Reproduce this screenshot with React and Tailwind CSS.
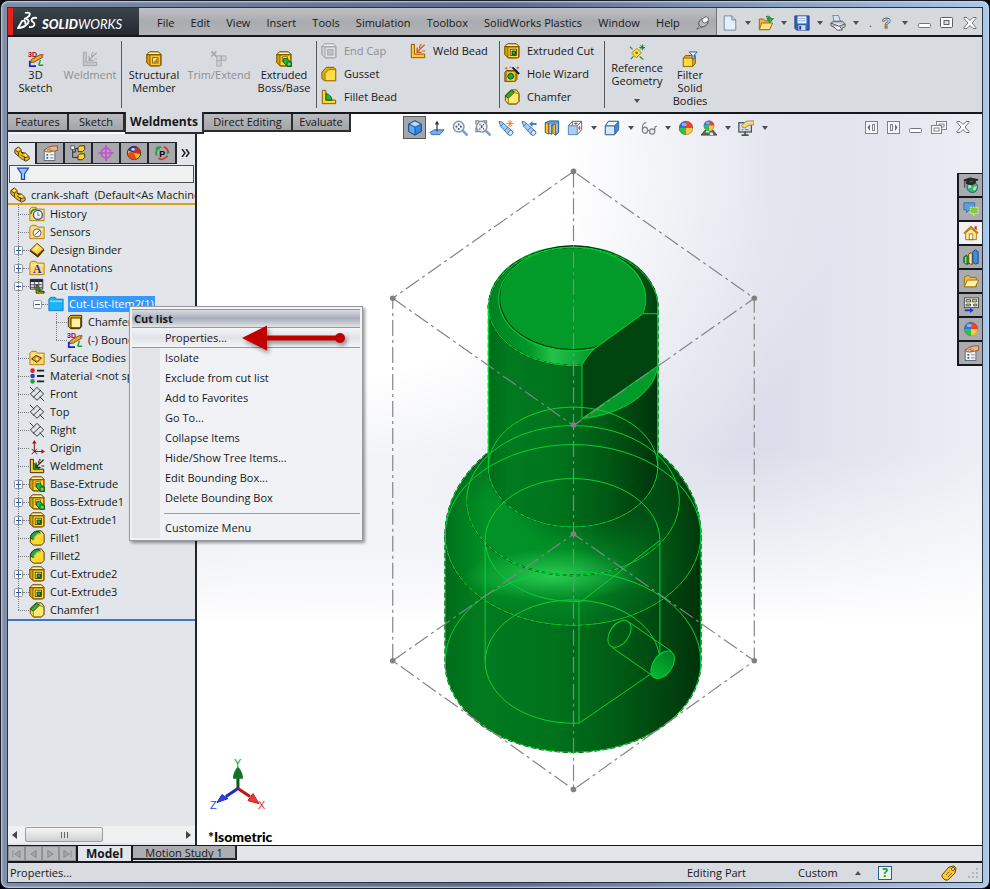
import React from "react";

/* ---------- icons ---------- */

const Svg = ({ children, s = 16, vb = "0 0 18 18", className = "" }) => (
  <svg width={s} height={s} viewBox={vb} className={"shrink-0 " + className} aria-hidden="true">
    {children}
  </svg>
);

const Cube = ({ line = "#7a5200", front = "#ffdc2e", top = "#fff3a0", side = "#d9a400" }) => (
  <g stroke={line} strokeLinejoin="round">
    <path d="M1 4 4 1H14L17 4V16L14 17H5L1 13Z" fill={side} />
    <path d="M1 4 4 1H14L17 4 5 4Z" fill={top} />
    <path d="M1 4 5 4.500V17L1 13Z" fill={side} />
    <rect x="4.500" y="4.500" width="12" height="12" rx="1" fill={front} />
  </g>
);

const Sketch3D = (p) => (
  <Svg {...p}>
    <text x="0" y="7" fontSize="8" fontWeight="700" fill="#b00020" fontFamily="Liberation Sans, sans-serif">3D</text>
    <path d="M2 11V17H9" fill="none" stroke="#1226d8" strokeWidth="2" />
    <path d="M12 16H17M12 16 14 10" fill="none" stroke="#15a32b" strokeWidth="1.500" />
    <path d="M4 9.500 14 4 16.500 7 7 12.500 2.500 13Z" fill="#f3a52a" stroke="#5b3200" strokeWidth=".9" />
    <path d="M14 4 17 3 17.500 6Z" fill="#d33" />
  </Svg>
);
const WeldIcon = ({ gray, green, ...p }) => {
  const l = gray ? "#a3a6a9" : green ? "#2b1c00" : "#8a4a00";
  return (
    <Svg {...p}>
      <path d="M1.500 1.500H5V12.500H16.500V16.500H1.500Z" fill={gray ? "#c3c6c9" : "#ffc933"} stroke={l} />
      {green && <path d="M5 5 12 12.500H5Z" fill="#19a535" stroke="#0b4a14" strokeWidth=".8" />}
      <path d="M8 10 16.500 2M8 5V10.500H13M11 3V6M14 9H17M12 1 12.500 3" stroke={gray ? l : green ? "#33260a" : "#d2500a"} strokeWidth="1.400" fill="none" />
    </Svg>
  );
};
const Structural = (p) => (
  <Svg {...p}>
    <Cube front="#ffc62c" />
    <rect x="7.500" y="7.500" width="6" height="6" fill="#fff0ae" stroke="#7a5200" />
    <path d="M8 13 13 8V13Z" fill="#b77d00" />
  </Svg>
);
const TrimIcon = (p) => (
  <Svg {...p}>
    <g fill="#cfd2d5" stroke="#a3a6a9">
      <path d="M6.500 5.500H11.500V17H6.500ZM11.500 5.500H17V10.500H11.500ZM6.500 11H11.500" />
      <path d="M0.500 .5 6 6M6 .5 .5 6" strokeWidth="1.800" />
    </g>
  </Svg>
);
const BossIcon = (p) => (
  <Svg {...p}>
    <Cube />
    <path d="M7 6.500H13V12H7Z" fill="#fff4b8" stroke="#7a5200" />
    <path d="M8.500 8.500H12L17.500 13V17.500H13L8.500 13Z" fill="#25b53e" stroke="#0b5a1a" />
    <path d="M12.500 12.500H17V17H12.500Z" fill="#63dc6f" stroke="#0b5a1a" />
  </Svg>
);
const CutIcon = (p) => (
  <Svg {...p}>
    <Cube />
    <rect x="7" y="7" width="7" height="7" fill="#fff6c0" stroke="#5c3e00" />
    <path d="M9 9H13V13H9Z" fill="#27a63a" stroke="#073d10" />
  </Svg>
);
const GussetIcon = (p) => (
  <Svg {...p}>
    <path d="M1 7 6 1.500H14.500L16.500 3.500V16.500H4L1 14Z" fill="#e3ab0b" stroke="#7a5200" />
    <path d="M4.500 8.500 9 4H16.500V16.500H4.500Z" fill="#ffdf45" stroke="#9a6a00" />
  </Svg>
);
const FilletBead = (p) => (
  <Svg {...p}>
    <path d="M1.500 1.500H5.500V12.500H16.500V16.500H1.500Z" fill="#ffd52e" stroke="#7a5200" />
    <path d="M5.500 5C10 6 12 9 12.500 12.500H5.500Z" fill="#22b53c" stroke="#0b5a1a" />
  </Svg>
);
const EndCap = (p) => (
  <Svg {...p}>
    <Cube line="#a3a6a9" front="#dcdfe1" top="#e8eaec" side="#cdd0d3" />
    <rect x="7.500" y="7.500" width="6" height="6" fill="#bfc2c5" stroke="#a3a6a9" />
  </Svg>
);
const HoleWizard = (p) => (
  <Svg {...p}>
    <path d="M1 7 3 5H14.500V15L12.500 17.500H1Z" fill="#e3ab0b" stroke="#5c3e00" />
    <rect x="2.500" y="6.500" width="10" height="10.500" fill="#ffd42e" stroke="#7a5200" strokeWidth=".7" />
    <circle cx="7.500" cy="11.500" r="3.300" fill="#28a63b" stroke="#064410" />
    <path d="M9.500 1.500 17 9" stroke="#1b1b1b" strokeWidth="2.200" />
    <path d="M1 2.500H4M2.500 1V4M6 1.500H8.500M14 2H17M15.500 .5V3.500" stroke="#e2571a" />
  </Svg>
);
const ChamferIcon = (p) => (
  <Svg {...p}>
    <path d="M1.500 7 8 1H14L17 5V14L14 17H5L1.500 13Z" fill="#ffda35" stroke="#5c3e00" />
    <path d="M1.500 8 8.500 1.500 12 3.500 5 10.500Z" fill="#27b13e" stroke="#07490f" />
    <path d="M5 10.500 12 4 16.500 5.500V14L13.500 16.500H5Z" fill="#ffea72" stroke="#8a6400" strokeWidth=".8" />
  </Svg>
);
const FilletIcon = (p) => (
  <Svg {...p}>
    <path d="M1.500 9C2 4 6 1 11 1H14L17 5V14L14 17H5L1.500 14Z" fill="#ffd92c" stroke="#3d2a00" />
    <path d="M1.500 9C2 4 6 1 11 1.500L13 4C9 4 6 7 5.500 11Z" fill="#24a83b" stroke="#053d0d" />
    <path d="M5.500 11C6 7 9 4 13 4" fill="none" stroke="#fff3a0" />
  </Svg>
);
const RefGeom = (p) => (
  <Svg {...p}>
    <path d="M9 5 14 10 8 15.500 3 10Z" fill="#ffe34d" stroke="#a37a00" />
    <path d="M1 3 4 6M12 14 16 17.500M2 17 5 14" stroke="#24862f" strokeWidth="1.300" />
    <path d="M11.500 4H18M15 .5V7M12.500 1.500 17 6M17 1.500 12.500 6" stroke="#11752b" />
    <circle cx="8.500" cy="10" r="1.500" fill="#9a6a00" />
  </Svg>
);
const FilterSolid = (p) => (
  <Svg {...p}>
    <path d="M1.500 8 4 5H15V14L12 17.500H1.500Z" fill="#e3ab0b" stroke="#7a5200" />
    <rect x="1.500" y="8" width="10.500" height="9.500" fill="#ffd940" stroke="#9a6a00" />
    <path d="M8 1H17L13.500 5V9H11.500V5Z" fill="#e2efff" stroke="#1958c4" />
  </Svg>
);
const PartIcon = (p) => (
  <Svg {...p}>
    <path d="M1 4 5 1 8 4V7L13 8 17 12V15L13 17 8 14 1 8Z" fill="#f4bd16" stroke="#3d2900" />
    <path d="M2 5 5 7 7 5M8 10 12 13 16 12M8 7 12 10V16M5 7V11" stroke="#3d2900" fill="none" />
    <path d="M3 4 5 2.500 6.500 4 4.500 5.500ZM10 9.500 13 9 15.500 11.500 12.500 12Z" fill="#ffe98a" />
  </Svg>
);
const PropIcon = (p) => (
  <Svg {...p}>
    <rect x="2.500" y="5.500" width="12" height="12" fill="#f1f3f6" stroke="#5d6672" />
    <path d="M5 11H7M5 14.500H7" stroke="#2c5dc5" strokeWidth="2" />
    <path d="M9 11H13M9 14.500H13" stroke="#7b838e" />
    <path d="M2.500 6 7 2.500 13 1H17.500V6L13 7 8 8 4 7.500Z" fill="#eeb782" stroke="#7a471d" strokeWidth=".9" />
    <path d="M6 5.500 10 4M8 7 12 5.500" stroke="#7a471d" strokeWidth=".7" />
  </Svg>
);
const ConfigIcon = (p) => (
  <Svg {...p}>
    <path d="M3 5V14H9M3 8H6V4H9" stroke="#222" fill="none" />
    <rect x="1" y="1" width="4" height="4" fill="#eee" stroke="#333" strokeWidth=".7" />
    <path d="M9 3 11 1H16.500V5L14 7.500H9ZM9 12 11 10H16.500V14L14 16.500H9Z" fill="#ffd52c" stroke="#3d2900" />
  </Svg>
);
const Target = (p) => (
  <Svg {...p}>
    <g stroke="#c64fd6" fill="none" strokeWidth="1.800">
      <circle cx="9" cy="9" r="5.500" />
      <path d="M9 0V18M0 9H18" />
    </g>
  </Svg>
);
const Ball = ({ x = 9, y = 9, r = 8 }) => (
  <g transform={`translate(${x} ${y}) scale(${r / 8})`}>
    <circle r="8" fill="#eee" />
    <path d="M0 0V-8A8 8 0 0 0-8 0Z" fill="#2f6fe0" />
    <path d="M0 0V-8A8 8 0 0 1 8 0Z" fill="#e8442e" />
    <path d="M0 0H-8A8 8 0 0 0 0 8Z" fill="#2fc04a" />
    <path d="M0 0H8A8 8 0 0 1 0 8Z" fill="#f6c843" />
    <circle r="7.600" fill="none" stroke="#555" strokeWidth=".7" opacity=".6" />
    <ellipse cx="-2" cy="-4" rx="3" ry="2" fill="#fff" opacity=".45" />
  </g>
);
const BallIcon = (p) => <Svg {...p}><Ball /></Svg>;
const DisplayIcon = (p) => (
  <Svg {...p}>
    <circle cx="9" cy="9" r="7.500" fill="#f5c21c" stroke="#222" />
    <path d="M9 9 2 6A7.500 7.500 0 0 1 12 2Z" fill="#1d37b8" />
    <path d="M9 9 11 2A7.500 7.500 0 0 1 16.500 10Z" fill="#d6281c" />
    <path d="M9 9C5 7 3 8 2 11 4 17 10 17 12 16Z" fill="#e84a1d" />
    <ellipse cx="8" cy="5" rx="2" ry="1.500" fill="#fff" opacity=".8" />
  </Svg>
);
const PlasticIcon = (p) => (
  <Svg {...p}>
    <path d="M3 12A7 7 0 0 1 8 2" fill="none" stroke="#25a03a" strokeWidth="2" />
    <path d="M11 2A7 7 0 0 1 16 8" fill="none" stroke="#d8342b" strokeWidth="2" />
    <path d="M15 12A7 7 0 0 1 5 15" fill="none" stroke="#d8342b" strokeWidth="2" />
    <path d="M1 4 5 1 7 5ZM14 7 18 8 15 11Z" fill="#25a03a" />
    <text x="6" y="13" fontSize="10" fontWeight="700" fontFamily="Liberation Sans, sans-serif">P</text>
  </Svg>
);
const Folder = ({ children, fill = "#ffd968", line = "#b07a00" }) => (
  <Svg>
    <path d="M1 3.500 3 1.500H8L9.500 3.500H17V16.500H1Z" fill={fill} stroke={line} />
    <path d="M2 5H16V7H2Z" fill="#fff" opacity=".45" />
    {children}
  </Svg>
);
const HistoryIcon = () => (
  <Folder>
    <circle cx="10" cy="10" r="5" fill="#eef4ff" stroke="#315a9c" strokeWidth="1.500" />
    <path d="M10 7V10.500H12" stroke="#c33" fill="none" />
    <path d="M2 9C3 4 6 3 9 4" stroke="#1a9a34" strokeWidth="1.800" fill="none" />
  </Folder>
);
const SensorsIcon = () => (
  <Folder>
    <circle cx="9" cy="10" r="4.500" fill="#f5f5ef" stroke="#556" />
    <path d="M7 12 12 7" stroke="#333" />
  </Folder>
);
const BinderIcon = () => (
  <Svg>
    <path d="M1 10 9 2 17 9 10 17Z" fill="#5a3c00" stroke="#2b1c00" />
    <path d="M1.500 9 9 1.500 16.500 8 9.500 14.500Z" fill="#ffd13c" stroke="#6b4700" />
    <path d="M5 8 9 4 12 6.500 8 10Z" fill="#ffeb96" />
  </Svg>
);
const AnnotIcon = () => (
  <Folder>
    <text x="4.500" y="15" fontSize="13" fontWeight="700" fill="#1b2fb8" fontFamily="Liberation Serif, serif">A</text>
  </Folder>
);
const SurfaceIcon = () => (
  <Folder>
    <path d="M3 10 8 6 14 9 9 14Z" fill="#e29a1b" stroke="#3b2600" />
    <circle cx="9" cy="10" r="1.500" fill="#ffe9a0" />
  </Folder>
);
const CutListIcon = () => (
  <Svg>
    <path d="M1.500 1.500H15.500V12.500H1.500Z" fill="#e8ebef" stroke="#223" />
    <path d="M1.500 3H15.500" stroke="#223" strokeWidth="3" />
    <path d="M1 7.500H15M1 10.500H15M6 2V12M11 2V12" stroke="#445" />
    <path d="M8 8H10V15H17V17H8Z" fill="#f5bf16" stroke="#221700" />
    <path d="M10 9 15 15H10Z" fill="#18802c" />
  </Svg>
);
const BlueFolder = () => <Folder fill="#19b4f5" line="#1478c8" />;
const BodyIcon = () => (
  <Svg>
    <path d="M1.500 4 4 1.500H16.500V14L14 16.500H4L1.500 14Z" fill="#e3a900" stroke="#2d1e00" />
    <rect x="4.500" y="4.500" width="11" height="11" fill="#fff2a0" stroke="#2d1e00" />
  </Svg>
);
const MaterialIcon = () => (
  <Svg>
    <circle cx="4" cy="3" r="2.600" fill="#d8281f" /><circle cx="4" cy="9" r="2.600" fill="#2446c8" /><circle cx="4" cy="15" r="2.600" fill="#1ca436" />
    <path d="M9 3H17M9 9H17M9 15H17" stroke="#222" strokeWidth="2" />
  </Svg>
);
const PlaneIcon = () => (
  <Svg>
    <path d="M9 1.500 16.500 9 9 16 1.500 9ZM1 1 6 6M12 12 17 17M13 5 4.500 13" fill="none" stroke="#222" />
  </Svg>
);
const OriginIcon = () => (
  <Svg>
    <path d="M6 13V3M6 13H16" stroke="#a01818" strokeWidth="1.200" fill="none" />
    <path d="M3.500 4 6 0 8.500 4ZM14 10.500 18 13 14 15.500Z" fill="#a01818" />
    <path d="M3 10 9 16M9 10 3 16" stroke="#222" />
  </Svg>
);
const Funnel = () => (
  <Svg s={14}>
    <path d="M2 1.500H16L11 9V16H7V9Z" fill="#8ec5ff" stroke="#1749b8" strokeWidth="1.500" />
  </Svg>
);
const Caret = ({ up, className = "" }) => (
  <svg width="6" height="4" viewBox="0 0 6 4" className={"shrink-0 " + className} aria-hidden="true">
    <path d={up ? "M0 4 3 0 6 4Z" : "M0 0 6 0 3 4Z"} fill="#4a4f56" />
  </svg>
);

/* view toolbar */
const IsoCube = () => (
  <Svg>
    <path d="M9 1 16 4.500V13L9 17 2 13V4.500Z" fill="#2f86e8" stroke="#123f80" />
    <path d="M9 1 16 4.500 9 8 2 4.500Z" fill="#b8dcff" stroke="#123f80" strokeWidth=".8" />
    <path d="M9 8V17L2 13V4.500Z" fill="#5da9f5" stroke="#123f80" strokeWidth=".8" />
  </Svg>
);
const NormalTo = () => (
  <Svg>
    <path d="M1 14 6 11H17L12 16.500H3Z" fill="#79aee6" stroke="#2d68ad" />
    <path d="M9 13V3" stroke="#333" strokeWidth="1.300" /><path d="M6.500 5 9 .5 11.500 5Z" fill="#333" />
  </Svg>
);
const Zoom = ({ area }) => (
  <Svg>
    {area
      ? <path d="M1 5V1H5M9 1H13V4M1 9V13H4" fill="none" stroke="#7b828c" strokeWidth="1.300" />
      : null}
    <circle cx="7.500" cy="7.500" r="6" fill="#eef1f5" fillOpacity=".8" stroke="#8b929c" strokeWidth="1.600" />
    <path d={area ? "M5 5H6M9 5H10M5 10H6M9 10H10M7.500 6V9" : "M4 7.500H6M9 7.500H11M7.500 4V6M7.500 9V11"} stroke="#4a525d" strokeWidth="1.800" />
    <path d="M12 12 16.500 16.500" stroke="#7a9fd0" strokeWidth="3" strokeLinecap="round" />
  </Svg>
);
const Scope = ({ arrow }) => (
  <Svg>
    <path d="M1 1.500 4 2 15.500 12 12 17 3 7Z" fill="#a8cdf4" stroke="#3c6ea8" />
    <path d="M3 7 6 4M7.500 12 11.500 8" stroke="#3c6ea8" fill="none" />
    <ellipse cx="14" cy="14.500" rx="3" ry="2.500" fill="#d6e8fb" stroke="#3c6ea8" transform="rotate(-50 14 14.500)" />
    {arrow ? <path d="M9 4.500 13 1V3.300H17.500V5.700H13V8Z" fill="#3e82d8" /> : <path d="M13.500 0V8M9.500 4H17.500M11 1 16 7M16 1 11 7" stroke="#ef7d20" />}
  </Svg>
);
const Section = () => (
  <Svg>
    <path d="M1.500 3 6 1H16.500V14L13 17V6H9V16L1.500 14Z" fill="#5b9ddf" stroke="#20508a" />
    <path d="M1.500 3 5 4V16L1.500 14ZM10 5H13V17L10 15Z" fill="#f7c22d" stroke="#7a5200" strokeWidth=".8" />
    <path d="M7 5V15M14.500 4V14" stroke="#d8e9fb" />
  </Svg>
);
const Orient = () => (
  <Svg>
    <path d="M1.500 6.500H11.500V16.500H1.500Z" fill="#a9cdf5" stroke="#4a7db8" />
    <path d="M1.500 6.500 6 1.500H16.500V11L11.500 16.500M11.500 6.500 16.500 1.500M6 1.500V6.500" fill="none" stroke="#555" />
    <path d="M8 4H12M10 2.500V5.500M14 7V11M12.500 9H15.500" stroke="#d22" />
  </Svg>
);
const Style = () => (
  <Svg>
    <path d="M1.500 6.500 5 1.500H16.500V11L12 16.500H1.500Z" fill="#4588d8" stroke="#34629c" />
    <path d="M1.500 6.500H12V16.500H1.500Z" fill="#d5e8fc" stroke="#34629c" />
    <path d="M1.500 6.500 5 1.500H16.500L12 6.500Z" fill="#eef6ff" stroke="#34629c" />
  </Svg>
);
const Glasses = () => (
  <Svg>
    <g fill="#e2ebf4" stroke="#77818c" strokeWidth="1.300">
      <ellipse cx="4.500" cy="11.500" rx="3" ry="3.500" /><ellipse cx="12.500" cy="13" rx="3" ry="3" />
      <path d="M7.500 11.500 9.500 12M1.500 10C1 6 3 3 6 3M15.500 12V9C15.500 7 17 7 18 7" fill="none" />
    </g>
  </Svg>
);
const Scene = () => (
  <Svg>
    <path d="M0 17 5 11H13L18 17Z" fill="#5a6a5a" stroke="#444" />
    <path d="M4 17 6.500 11H9.500V14H13L14 17H10V14H5Z" fill="#e8e8e8" />
    <Ball y={6.500} r={6} />
  </Svg>
);
const ViewSet = () => (
  <Svg>
    <rect x="1" y="3" width="14" height="10.500" fill="#dfe4ea" stroke="#4b5560" strokeWidth="1.500" />
    <path d="M4 17H12M8 13V17" stroke="#4b5560" strokeWidth="2" />
    <path d="M4 11H6M8 11H12" stroke="#4b5560" />
    <path d="M4 6 9 1.500 13 1H18V5.500L12 6 8 9 5 8.500Z" fill="#f2d38b" stroke="#8d6a26" strokeWidth=".8" />
  </Svg>
);
const PaneLeft = ({ flip }) => (
  <svg width="13" height="13" viewBox="0 0 13 13" className={flip ? "-scale-x-100" : ""} aria-hidden="true">
    <rect x=".5" y=".5" width="12" height="12" fill="#f6f7fa" stroke="#7d828a" />
    <path d="M5 3V10L2.500 6.500Z" fill="#666b73" /><rect x="7.500" y="3.500" width="2" height="6" fill="#fff" stroke="#7d828a" />
  </svg>
);
const MinIcon = () => (
  <svg width="13" height="11" viewBox="0 0 13 11" aria-hidden="true"><rect x=".5" y="6.500" width="12" height="4" rx="1" fill="#fff" stroke="#70757c" /></svg>
);
const MaxIcon = () => (
  <svg width="13" height="11" viewBox="0 0 13 11" aria-hidden="true"><rect x=".5" y=".5" width="12" height="10" rx="1" fill="#fff" stroke="#5c6168" /><rect x="4" y="3.500" width="5" height="4" fill="#d8dbdf" stroke="#5c6168" /></svg>
);
const RestoreIcon = () => (
  <svg width="16" height="13" viewBox="0 0 16 13" aria-hidden="true"><g fill="#fff" stroke="#7d828a"><rect x="5.500" y=".5" width="10" height="8" /><rect x="8" y="3" width="5" height="3" /><rect x=".5" y="4.500" width="10" height="8" /><rect x="3" y="7" width="5" height="3" /></g></svg>
);
const CloseIcon = () => (
  <svg width="14" height="12" viewBox="0 0 14 12" aria-hidden="true"><path d="M1 .5H4L7 3.500 10 .5H13V1.500L9 6 13 10.500V11.500H10L7 8.500 4 11.500H1V10.500L5 6 1 1.500Z" fill="#fff" stroke="#6a6f77" /></svg>
);

/* quick access */
const NewDoc = () => <Svg><path d="M2.500 1H11L15.500 5.500V17H2.500Z" fill="#e3effc" stroke="#6b7f9c" /><path d="M11 1V5.500H15.500" fill="#c6d9f0" stroke="#6b7f9c" /></Svg>;
const OpenDoc = () => (
  <Svg>
    <path d="M1.500 4.500H6L8 6.500H13V16.500H1.500Z" fill="#f0b73a" stroke="#8d6212" />
    <path d="M4 9H16.500L13 16.500H1.500Z" fill="#ffe283" stroke="#8d6212" />
    <path d="M9 2C12 .5 14 1.500 14.500 4H17.500L13.500 8.500 10 4H12.500C12 3 11 2.500 9 2Z" fill="#2cb043" stroke="#0e6420" strokeWidth=".7" />
  </Svg>
);
const SaveDoc = () => (
  <Svg>
    <path d="M1 1H17V17H3L1 15Z" fill="#2d62c2" stroke="#173a80" />
    <rect x="4" y="1.500" width="10" height="8" fill="#eef4fc" /><path d="M5 4H13M5 6.500H13" stroke="#8ba4cc" />
    <rect x="5" y="11.500" width="8" height="5.500" fill="#cfd6e0" /><rect x="6" y="12.500" width="2" height="4" fill="#173a80" />
  </Svg>
);
const PrintDoc = () => (
  <Svg>
    <path d="M3 .5H9.500L12 8H5Z" fill="#cfe3fb" stroke="#66809f" />
    <path d="M1 9 4 7H14L17 10V13L11 17 1 12Z" fill="#b9bec6" stroke="#4d545e" />
    <path d="M1 9 10 12.500 17 10M4 13 8 17H14L11 13" fill="#f2f3f5" stroke="#4d545e" />
  </Svg>
);
const HelpIcon = () => <Svg><text x="3" y="15" fontSize="17" fontWeight="700" fill="#fff" stroke="#555a62" strokeWidth=".9" fontFamily="Liberation Sans, sans-serif">?</text></Svg>;
const PinIcon = () => (
  <Svg s={14}>
    <path d="M6 10 1 17 9 13" fill="#eee" stroke="#555" />
    <ellipse cx="9.500" cy="8.500" rx="6.500" ry="5" fill="#b9bdc2" stroke="#444" transform="rotate(-35 9.500 8.500)" />
    <ellipse cx="12" cy="5" rx="4.500" ry="3.500" fill="#f4f5f6" stroke="#555" transform="rotate(-35 12 5)" />
  </Svg>
);

/* task pane */
const Learn = () => (
  <Svg><circle cx="10.500" cy="11.500" r="6" fill="#3cb45a" stroke="#1c5c8a" /><path d="M6 9 10 8 9 12 6 13ZM12 11 16 10 14 15 11 15Z" fill="#a5dcf7" /><path d="M1 3.500 8 1 17 3 10 6.500ZM4 5V7.500L10 9 14 6.500V5M2 4V12" fill="#2a2a2a" stroke="#1c1c1c" /></Svg>
);
const Forum = () => (
  <Svg><path d="M1 2H13V10H7L4 13V10H1Z" fill="#5a9fe0" stroke="#3470ad" /><path d="M8 7H17V14H14L12 17V14H8Z" fill="#8ccb35" stroke="#e7f5c5" strokeDasharray="2 1" /></Svg>
);
const Home = () => (
  <Svg><path d="M3 9V16.500H15V9L9 4Z" fill="#ffe9a3" stroke="#a66a00" /><path d="M1 9.500 9 2 17 9.500" fill="none" stroke="#c98200" strokeWidth="2" /><path d="M13 1.500H15.500V6L13 4Z" fill="#c33" /><rect x="7" y="10" width="4" height="6.500" fill="#fff" stroke="#a66a00" /></Svg>
);
const Library = () => (
  <Svg><path d="M1 9 4 7 6 9V17H3L1 15Z" fill="#1da14b" stroke="#0b4d1c" /><path d="M6 6 9 4 11 6V17H8L6 15Z" fill="#f2bd1d" stroke="#6b4700" /><path d="M3 9V16M8.500 6V16" stroke="#fff" strokeWidth=".8" /><path d="M11 3 14 1 17 3V16L14 17 11 15Z" fill="#3b8ee0" stroke="#173f80" /></Svg>
);
const Explorer = () => (
  <Svg><path d="M1.500 4.500 6 2.500 8 5H15V15.500H1.500Z" fill="#f2b944" stroke="#9a6a12" /><path d="M5 8H17.500L14 15.500H1.500Z" fill="#fff0a8" stroke="#9a6a12" /></Svg>
);
const Palette = () => (
  <Svg><g stroke="#444" fill="#ffe45c"><rect x="1.500" y="1" width="16" height="11" fill="#eef2f8" /><path d="M3.500 3H8.500V5.500H3.500ZM10.500 3H15.500V5.500H10.500ZM3.500 8H8.500V10H3.500ZM12 8H15.500V10H12Z" /></g><path d="M2 15H9" stroke="#1834c8" strokeWidth="2" /><path d="M8 12 12 15 8 18Z" fill="#1834c8" /></Svg>
);

const ICONS_TASK = [
  ["Resources", Learn], ["Forum", Forum], ["Home", Home], ["Design Library", Library],
  ["File Explorer", Explorer], ["View Palette", Palette], ["Appearances", BallIcon], ["Custom Properties", PropIcon],
];

/* ---------- title bar ---------- */

const MENUS = ["File", "Edit", "View", "Insert", "Tools", "Simulation", "Toolbox", "SolidWorks Plastics", "Window", "Help"];

function TitleBar() {
  return (
    <header className="flex h-[29px] shrink-0 border-b-2 border-[#15181c] bg-[#d6d9dc]">
      <div className="flex w-[131px] shrink-0 items-center border-l-[5px] border-[#e2231a] bg-linear-to-b from-[#3c444c] to-[#23292f] text-white">
        <svg width="22" height="22" viewBox="0 0 22 22" className="ml-[4px]" fill="none" stroke="#fff" strokeWidth="1.800" aria-hidden="true">
          <path d="M8 2C12 1 14 2 12 5 11 6 9 8 7 8M9 8C13 9 12 12 9 14 7 16 3 17 1 17L5 10C8 9 9 11 8 13M20 7C15 6 13 9 16 11 19 13 17 17 12 16" />
        </svg>
        <span className="pt-[4px] pl-[3px] font-['Lato',sans-serif] text-[13px] font-black italic">SOLID<span className="font-normal">WORKS</span></span>
      </div>
      <nav className="flex flex-1 items-center justify-between bg-linear-to-b from-[#bfc1c4] via-[#a9abae] to-[#b2b4b7] pt-[3px] pr-[6px] pl-[18px]">
        {MENUS.map((m) => <button key={m}>{m}</button>)}
        <button aria-label="Pin menu"><PinIcon /></button>
      </nav>
      <div className="flex w-[266px] shrink-0 items-center border-l border-[#70747a] pt-[2px]">
        <div className="flex pl-[5px]">
          {[["New", NewDoc], ["Open", OpenDoc], ["Save", SaveDoc], ["Print", PrintDoc]].map(([n, I]) => (
            <button key={n} aria-label={n} className="flex w-9 items-center gap-[7px]"><I /><Caret /></button>
          ))}
        </div>
        <span className="ml-[3px] text-[#2c5d9c]">.</span>
        <button aria-label="Help" className="ml-[7px] flex items-center gap-[7px]"><HelpIcon /><Caret /></button>
        <div className="flex flex-1 items-center justify-between pr-[5px] pl-[10px]">
          <button aria-label="Minimize"><MinIcon /></button>
          <button aria-label="Maximize"><MaxIcon /></button>
          <button aria-label="Close"><CloseIcon /></button>
        </div>
      </div>
    </header>
  );
}

/* ---------- ribbon ---------- */

const Big = ({ icon: I, lines, off, w, caret, top }) => (
  <button className={"flex flex-col items-center leading-[13px] whitespace-nowrap " + w + " " + (top ? "pt-[7px] " : "pt-[14px] ") + (off ? "text-[#8c8f92]" : "")}>
    <I className="mb-px" />
    {lines.map((l) => <span key={l}>{l}</span>)}
    {caret && <Caret className="mt-[12px]" />}
  </button>
);
const Small = ({ icon: I, label, off }) => (
  <button className={"flex h-[23px] items-center gap-[7px] whitespace-nowrap " + (off ? "text-[#8c8f92]" : "")}><I />{label}</button>
);
const Rule = () => <div className="my-[4px] w-px shrink-0 bg-[#55595e]" />;

function Ribbon() {
  return (
    <section aria-label="Weldments commands" className="flex h-[77px] shrink-0 border-b-2 border-[#15181c] bg-[#d8dbdf]">
      <div className="flex w-[113px] shrink-0">
        <Big icon={Sketch3D} lines={["3D", "Sketch"]} w="w-[55px]" />
        <Big icon={(p) => <WeldIcon gray {...p} />} lines={["Weldment"]} off w="w-[54px]" />
      </div>
      <Rule />
      <div className="flex w-[194px] shrink-0">
        <Big icon={Structural} lines={["Structural", "Member"]} w="w-[64px]" />
        <Big icon={TrimIcon} lines={["Trim/Extend"]} off w="w-[66px]" />
        <Big icon={BossIcon} lines={["Extruded", "Boss/Base"]} w="w-[64px]" />
      </div>
      <Rule />
      <div className="flex w-[182px] shrink-0 gap-[13px] pt-[2px] pl-[4px]">
        <div className="w-[76px]">
          <Small icon={EndCap} label="End Cap" off />
          <Small icon={GussetIcon} label="Gusset" />
          <Small icon={FilletBead} label="Fillet Bead" />
        </div>
        <div><Small icon={WeldIcon} label="Weld Bead" /></div>
      </div>
      <Rule />
      <div className="w-[104px] shrink-0 pt-[2px] pl-[4px]">
        <Small icon={CutIcon} label="Extruded Cut" />
        <Small icon={HoleWizard} label="Hole Wizard" />
        <Small icon={ChamferIcon} label="Chamfer" />
      </div>
      <Rule />
      <Big icon={RefGeom} lines={["Reference", "Geometry"]} caret top w="w-[64px]" />
      <Big icon={FilterSolid} lines={["Filter", "Solid", "Bodies"]} w="w-[42px]" />
    </section>
  );
}

const TABS = [["Features", "w-[61px]"], ["Sketch", "w-[56px]"], ["Weldments", "w-[79px]"], ["Direct Editing", "w-[89px]"], ["Evaluate", "w-[58px]"]];

function CommandTabs() {
  return (
    <div role="tablist" className="flex h-5 shrink-0 items-start">
      {TABS.map(([t, w], i) => (
        <button key={t} role="tab" aria-selected={i === 2}
          className={"shrink-0 border-r-2 border-b-2 whitespace-nowrap border-[#2a2d32] " + w + (i === 2 ? " -mt-[2px] h-[22px] border-l bg-[#d8dbdf] text-[12px] font-bold" : " h-[18px] bg-linear-to-b from-[#b9bbbe] to-[#a2a4a7] leading-4")}>
          {t}
        </button>
      ))}
    </div>
  );
}

/* ---------- feature tree ---------- */

const WeldTree = () => <WeldIcon green />;
const TREE = [
  { t: "History", i: HistoryIcon }, { t: "Sensors", i: SensorsIcon },
  { t: "Design Binder", i: BinderIcon, x: "+" }, { t: "Annotations", i: AnnotIcon, x: "+" },
  { t: "Cut list(1)", i: CutListIcon, x: "-" },
  { t: "Cut-List-Item2(1)", i: BlueFolder, x: "-", d: 1 },
  { t: "Chamfer1", i: BodyIcon, d: 2 }, { t: "(-) Bounding Box", i: Sketch3D, d: 2 },
  { t: "Surface Bodies", i: SurfaceIcon }, { t: "Material <not specified>", i: MaterialIcon },
  { t: "Front", i: PlaneIcon }, { t: "Top", i: PlaneIcon }, { t: "Right", i: PlaneIcon },
  { t: "Origin", i: OriginIcon }, { t: "Weldment", i: WeldTree },
  { t: "Base-Extrude", i: BossIcon, x: "+" }, { t: "Boss-Extrude1", i: BossIcon, x: "+" },
  { t: "Cut-Extrude1", i: CutIcon, x: "+" }, { t: "Fillet1", i: FilletIcon }, { t: "Fillet2", i: FilletIcon },
  { t: "Cut-Extrude2", i: CutIcon, x: "+" }, { t: "Cut-Extrude3", i: CutIcon, x: "+" }, { t: "Chamfer1", i: ChamferIcon },
];
const INDENT = ["pl-[6px]", "pl-[25px]", "pl-[44px]"];

function TreeRow({ t, i: I, x, d = 0 }) {
  return (
    <li role="treeitem" className={"flex h-[18px] items-center whitespace-nowrap " + INDENT[d]}>
      <span className="flex w-[15px] shrink-0 items-center">
        {x ? (
          <svg width="9" height="9" viewBox="0 0 9 9" aria-hidden="true">
            <rect x=".5" y=".5" width="8" height="8" rx="1" fill="#fff" stroke="#8f959d" />
            <path d={x === "+" ? "M2 4.500H7M4.500 2V7" : "M2 4.500H7"} stroke="#2a4fa3" />
          </svg>
        ) : <span className="w-[4px]" />}
        <span className="flex-1 border-t border-dotted border-[#777c84]" />
      </span>
      <I />
      <button className={d === 1 ? "ml-[4px] bg-[#3399ff] px-px leading-4 text-white" : "ml-[5px]"}>{t}</button>
    </li>
  );
}

function FeaturePanel() {
  const tabs = [PartIcon, PropIcon, ConfigIcon, Target, DisplayIcon, PlasticIcon];
  const names = ["Feature tree", "Properties", "Configurations", "Dimensions", "Display", "Plastics"];
  return (
    <aside className="flex w-[189px] shrink-0 flex-col overflow-hidden border-r-2 border-[#22252a] bg-[#e2e5e9]">
      <div className="mx-px mt-[8px] flex h-[22px] shrink-0 items-stretch">
        {tabs.map((I, k) => (
          <button key={k} aria-label={names[k]} className={"flex w-7 items-center justify-center border-t border-r-2 border-[#22252a] " + (k === 0 ? "bg-[#e2e5e9]" : "border-b bg-[#a6a8ab]")}><I /></button>
        ))}
        <button aria-label="More" className="flex flex-1 items-center justify-center">
          <svg width="9" height="8" viewBox="0 0 9 8" fill="none" stroke="#222" strokeWidth="1.500" aria-hidden="true"><path d="M1 0 4 4 1 8M5 0 8 4 5 8" /></svg>
        </button>
      </div>
      <label className="mx-px mt-px flex h-[18px] shrink-0 items-center border border-[#4b4f55] bg-[#eff1f3] pl-[6px]">
        <Funnel />
        <input aria-label="Filter" className="min-w-0 flex-1 bg-transparent outline-none" />
      </label>
      <button className="mt-[3px] flex h-[19px] shrink-0 items-center gap-[5px] border-b-2 border-[#dca021] pl-[2px] whitespace-pre">
        <PartIcon />{"crank-shaft  (Default<As Machined>)"}
      </button>
      <ul role="tree" className="relative shrink-0 border-b-2 border-[#3f78bd]">
        <span className="absolute top-0 bottom-[9px] left-[10px] border-l border-dotted border-[#777c84]" />
        <span className="absolute top-[108px] left-[48px] h-[27px] border-l border-dotted border-[#777c84]" />
        {TREE.map((r, k) => <TreeRow key={k} {...r} />)}
      </ul>
      <div className="flex-1" />
      <div className="mb-[2px] flex h-[17px] shrink-0 items-center bg-[#eff0f1] px-[4px]">
        <svg width="5" height="8" viewBox="0 0 5 8" aria-hidden="true"><path d="M5 0V8L0 4Z" fill="#444" /></svg>
        <div className="ml-[8px] flex h-[15px] w-[78px] items-center justify-center gap-[2px] rounded-xs border border-[#9a9da1] bg-linear-to-b from-[#f6f6f6] to-[#cfd1d4]">
          <i className="h-[6px] w-px bg-[#666]" /><i className="h-[6px] w-px bg-[#666]" /><i className="h-[6px] w-px bg-[#666]" />
        </div>
        <svg width="5" height="8" viewBox="0 0 5 8" className="ml-auto" aria-hidden="true"><path d="M0 0V8L5 4Z" fill="#444" /></svg>
      </div>
    </aside>
  );
}

/* ---------- model ---------- */

const BODY = "M445.500 662V535C446 500 464 473 489 452V305A84.800 60 0 0 1 658.500 305V452C683 473 701 500 701.500 535V662A128 90.500 0 0 1 445.500 662Z";
const SHOULDER = "M445.500 535C446 500 464 473 489 452H658.500C683 473 701 500 701.500 535A128 90.500 0 0 1 445.500 535Z";

function Model() {
  return (
    <svg viewBox="197 134 786 711" className="h-full w-full" role="img" aria-label="Crank shaft model">
      <defs>
        <linearGradient id="cyl"><stop offset="0" stopColor="#006c1a" /><stop offset=".12" stopColor="#007a20" /><stop offset=".42" stopColor="#00731c" /><stop offset=".7" stopColor="#005814" /><stop offset="1" stopColor="#00330b" /></linearGradient>
        <linearGradient id="fil"><stop offset="0" stopColor="#00701b" /><stop offset=".16" stopColor="#009126" /><stop offset=".5" stopColor="#028f27" /><stop offset=".78" stopColor="#00651a" /><stop offset="1" stopColor="#00380c" /></linearGradient>
        <radialGradient id="hot" cx="553" cy="575" r="88" gradientUnits="userSpaceOnUse" gradientTransform="translate(0 403) scale(1 .3)"><stop offset="0" stopColor="#2acb54" /><stop offset="1" stopColor="#27c850" stopOpacity="0" /></radialGradient>
        <radialGradient id="cove" cx="610" cy="505" r="100" gradientUnits="userSpaceOnUse" gradientTransform="translate(0 253) scale(1 .5)"><stop offset="0" stopColor="#003a0c" stopOpacity=".75" /><stop offset="1" stopColor="#003a0c" stopOpacity="0" /></radialGradient>
        <linearGradient id="chm"><stop offset="0" stopColor="#008021" /><stop offset=".25" stopColor="#019a29" /><stop offset=".38" stopColor="#25c24b" /><stop offset=".6" stopColor="#059a2b" /><stop offset="1" stopColor="#003e0e" /></linearGradient>
        <linearGradient id="low" x1="0" y1="0" x2="0" y2="1"><stop offset="0" stopColor="#002808" stopOpacity=".3" /><stop offset=".3" stopColor="#002808" stopOpacity="0" /><stop offset=".75" stopColor="#002808" stopOpacity="0" /><stop offset="1" stopColor="#002808" stopOpacity=".25" /></linearGradient>
        <linearGradient id="hole" x1="0" y1="0" x2="1" y2="0"><stop offset="0" stopColor="#05b835" /><stop offset="1" stopColor="#007f20" /></linearGradient>
      </defs>
      <path d={BODY} fill="url(#cyl)" />
      <path d={SHOULDER} fill="url(#fil)" />
      <path d={SHOULDER} fill="url(#cove)" />
      <path d={SHOULDER} fill="url(#hot)" />
      <path d={SHOULDER} fill="url(#low)" />
      <path d="M488.700 305H658.300V467A84.800 60 0 0 1 488.700 467Z" fill="url(#cyl)" />
      <ellipse cx="573.500" cy="305" rx="84.800" ry="60" fill="url(#chm)" />
      <ellipse cx="573.500" cy="297.500" rx="73.700" ry="52" fill="#029a28" stroke="#002806" />
      <path d="M582.500 365C586 358 590 353 595 348.500L643.500 313.500 658.300 312V366L582.500 418.500Z" fill="#004510" />
      <path d="M582.500 418.500 658 366C656 392 624 414 582.500 418.500Z" fill="#029a28" />

      <g fill="none" stroke="#022807" strokeWidth="1.600">
        <path d={BODY} strokeDasharray="5 3" /><path d="M488.700 467A84.800 60 0 0 0 658.300 467M445.500 535A128 90.500 0 0 0 701.500 535M467 500.500A106.500 75 0 0 0 680 500.500M488.700 305A84.800 60 0 0 0 582.500 365" strokeDasharray="4 3" />
      </g>
      <g fill="none" stroke="#06d236" strokeWidth="1">
        <path d={BODY} />
        <path d="M488.700 305V467M658.300 305V467M488.700 305A84.800 60 0 0 0 582.500 365V418.500M595 348.500A73.700 52 0 1 1 643.500 313.500H658.300M595 348.500 643.500 313.500M582.500 365C586 358 590 353 595 348.500M582.500 418.500 658 366C656 392 624 414 582.500 418.500" />
        <ellipse cx="573.500" cy="467" rx="84.800" ry="60" />
        <ellipse cx="573.500" cy="500.500" rx="106.500" ry="75" />
        <ellipse cx="573.500" cy="535" rx="128" ry="90.500" />
        <path d="M445.500 662A128 90.500 0 0 1 701.500 662" />
        <path d="M485.500 540.500A87.500 62 0 0 1 660.500 540.500L582 601.500H573A87.500 62 0 0 1 485.500 540.500V662A87.500 62 0 0 0 573 723.500H579.500L660.500 668V540.500" />
        <path d="M485.500 662A87.500 62 0 0 1 660.500 662M573 601.500H579.500V723.500" />
        <ellipse cx="620" cy="634" rx="15" ry="9.500" transform="rotate(-55 620 634)" />
        <ellipse cx="663.300" cy="665" rx="15.500" ry="9.500" fill="url(#hole)" transform="rotate(-55 663.300 665)" />
        <path d="M629 622 672 651.500M613 648 654 676.500" />
      </g>
      <g fill="none" stroke="#858585" strokeWidth="1.200" strokeDasharray="16 4 3 4">
        <path d="M574 171 393 298V661L574 790 755 661V298Z" />
        <path d="M574 171V790M393 298 574 425.500 755 298M393 661 574 534 755 661" />
      </g>
      <g fill="#808080">
        {[[574, 171], [393, 298], [755, 298], [574, 425], [574, 534], [393, 661], [755, 661], [574, 790]].map(([x, y]) => <circle key={x + "-" + y} cx={x} cy={y} r="2.800" />)}
      </g>

      <g strokeWidth="3">
        <path d="M238 789V778" stroke="#0b5a1a" /><path d="M233 779C233 773 236 769 238 767 240 769 243 773 243 779Z" fill="#12722a" />
        <path d="M238 789 226 797" stroke="#1a2bc0" /><path d="M217 803 222 795 228 799Z" fill="#2a46e8" stroke="#1a2bc0" strokeWidth="1" />
        <path d="M238 789 250 797" stroke="#c01414" /><path d="M259 804 248 801 253 794Z" fill="#ef3b32" stroke="#c01414" strokeWidth="1" />
      </g>
      <g fontFamily="Liberation Sans, sans-serif" fontSize="11">
        <text x="234" y="767" fill="#109a30">Y</text>
        <text x="210" y="809" fill="#2a46e8">Z</text>
        <text x="258" y="809" fill="#e02a2a">X</text>
      </g>
      <text x="208" y="842" fontFamily="Lato, sans-serif" fontWeight="900" fontSize="14">*Isometric</text>
    </svg>
  );
}

function ViewToolbar() {
  const a = [["Normal to", NormalTo], ["Zoom to fit", Zoom], ["Zoom to area", () => <Zoom area />], ["Previous view", Scope], ["Next view", () => <Scope arrow />], ["Section view", Section],
    ["View orientation", Orient, 1], ["Display style", Style, 1], ["Hide or show", Glasses, 1], ["Appearance", BallIcon], ["Scene", Scene, 1], ["View settings", ViewSet, 1]];
  return (
    <div className="absolute top-[2px] left-[395px] flex h-[23px] items-center">
      <button aria-label="3D view" className="flex h-[23px] w-[23px] items-center justify-center border border-[#55595e] bg-[#a3a6aa]"><IsoCube /></button>
      {a.map(([n, I, c]) => (
        <button key={n} aria-label={n} className={"flex items-center pl-[3px] " + (c ? "w-[37px] gap-[8px]" : "w-[23px]")}><I />{c && <Caret />}</button>
      ))}
    </div>
  );
}

/* ---------- context menu ---------- */

const CTX = ["Isolate", "Exclude from cut list", "Add to Favorites", "Go To...", "Collapse Items", "Hide/Show Tree Items...", "Edit Bounding Box...", "Delete Bounding Box"];

function ContextMenu() {
  return (
    <div role="menu" className="absolute top-[192px] left-[121px] w-[234px] border border-[#979aa0] bg-[#f1f2f6] p-[2px] shadow-[2px_2px_3px_rgba(0,0,0,0.4)]">
      <div className="h-[19px] border-t border-b border-[#9497ac] bg-linear-to-b from-[#d9dce1] via-[#a7acb8] to-[#e3e5e9] pl-[2px] leading-[17px] font-bold">Cut list</div>
      <div className="flex flex-col bg-linear-to-r from-[#e2e4e8] from-[28px] to-[#f1f2f6] to-[28px]">
        <button role="menuitem" className="flex h-5 items-center border-b border-[#9497ac] bg-linear-to-b from-[#f4f5f8] via-[#e0e2e8] to-[#f4f5f8] pl-[33px]">Properties...</button>
        {CTX.map((c) => <button key={c} role="menuitem" className="flex h-5 items-center pl-[33px]">{c}</button>)}
        <hr className="mt-[5px] mb-[4px] ml-[32px] border-[#9a9da1]" />
        <button role="menuitem" className="flex h-5 items-center pl-[33px]">Customize Menu</button>
      </div>
      <svg width="106" height="30" viewBox="0 0 106 30" className="absolute top-[17px] left-[111px] drop-shadow-[2px_3px_2px_rgba(0,0,0,0.4)]" aria-hidden="true">
        <path d="M1 14 26 1.500V11.500H98V16.500H26V26.500Z" fill="#c00000" /><circle cx="99" cy="14" r="5" fill="#c00000" />
      </svg>
    </div>
  );
}

/* ---------- bottom ---------- */

function BottomBars() {
  return (
    <footer className="shrink-0">
      <div className="flex h-[18px] border-t border-b-2 border-[#15181c] bg-[#e2e5e9]">
        {["M2 2V10M10 2 4 6 10 10Z", "M9 2 3 6 9 10Z", "M3 2 9 6 3 10Z", "M10 2V10M2 2 8 6 2 10Z"].map((d, k) => (
          <button key={d} aria-label={["First", "Previous", "Next", "Last"][k]} className="flex w-[17px] items-center justify-center border border-[#8f9194] bg-[#b5b7ba]">
            <svg width="11" height="12" viewBox="0 0 12 12" fill="#a0a2a5" stroke="#8a8c8f" aria-hidden="true"><path d={d} /></svg>
          </button>
        ))}
        <button className="w-[57px] border-r-2 border-l-2 border-[#15181c] text-[12px] leading-[14px] font-bold">Model</button>
        <button className="h-[14px] w-[104px] border-r-2 border-b-2 border-[#22252a] bg-[#abadb0] leading-[13px]">Motion Study 1</button>
      </div>
      <div className="flex h-[19px] items-center bg-[#d8dbdf] pr-[3px] pl-[2px]">
        <span className="flex-1">Properties...</span>
        <span className="w-[111px]">Editing Part</span>
        <button className="flex w-[80px] items-center justify-between pr-[17px]">Custom<Caret up /></button>
        <button aria-label="Help" className="flex h-[14px] w-[14px] items-center justify-center border border-[#2b5f8e] bg-[#e9f5ee] text-[12px] font-bold text-[#0a9a35]">?</button>
        <svg width="16" height="16" viewBox="0 0 16 16" className="mr-[10px] ml-[49px]" aria-hidden="true">
          <path d="M1 10 8 2 13 1 15 3 14 8 7 15 4 15 1 12Z" fill="#ffc92c" stroke="#6b4700" /><circle cx="12" cy="4" r="1.500" fill="#fff" stroke="#6b4700" /><path d="M5 10 8.500 6.500M7 12 11 8" stroke="#8a5c00" />
        </svg>
        <svg width="12" height="12" viewBox="0 0 12 12" fill="#b3b6ba" aria-hidden="true"><path d="M9 1H11V3H9ZM9 5H11V7H9ZM5 5H7V7H5ZM9 9H11V11H9ZM5 9H7V11H5ZM1 9H3V11H1Z" /></svg>
      </div>
    </footer>
  );
}

export default function App() {
  return (
    <div className="h-screen bg-black font-['Open_Sans','Noto_Sans',sans-serif] text-[11px] leading-4 text-[#16181b]">
      <div className="flex h-full flex-col overflow-hidden rounded-lg border border-[#1b1f27] bg-linear-to-r from-[#7f8da6] via-[#5b6a8c] to-[#a9c8ea] px-[6px] pt-[6px] pb-[5px] shadow-[inset_0_0_2px_1px_#c9d6e8]">
        <div className="flex min-h-0 flex-1 flex-col border border-[#2a3442]">
          <TitleBar />
          <Ribbon />
          <main className="relative flex min-h-0 flex-1 flex-col bg-[#dbdeea] bg-[linear-gradient(to_bottom,transparent_46%,#ffffff_70%),linear-gradient(to_right,transparent_78%,#eceef4_100%),radial-gradient(ellipse_52%_62%_at_34%_8%,#ffffff_45%,transparent_100%)]">
            <CommandTabs />
            <div className="flex min-h-0 flex-1">
              <FeaturePanel />
              <div className="min-w-0 flex-1"><Model /></div>
            </div>
            <ViewToolbar />
            <div className="absolute top-[4px] right-0 flex h-[18px] w-[119px] items-center justify-between pr-[12px] pl-[2px]">
              <button aria-label="Collapse left"><PaneLeft /></button>
              <button aria-label="Collapse right"><PaneLeft flip /></button>
              <button aria-label="Minimize document"><MinIcon /></button>
              <button aria-label="Restore document"><RestoreIcon /></button>
              <button aria-label="Close document"><CloseIcon /></button>
            </div>
            <div className="absolute top-[59px] right-0 w-[25px] border-t border-l-2 border-[#15181c]">
              {ICONS_TASK.map(([n, I], k) => (
                <button key={n} aria-label={n} className={"flex h-6 w-full items-center justify-center border-b-2 border-[#15181c] " + (k === 2 ? "bg-[#f0f1f4]" : "bg-[#a9abae]")}><I /></button>
              ))}
            </div>
            <ContextMenu />
          </main>
          <BottomBars />
        </div>
      </div>
    </div>
  );
}
